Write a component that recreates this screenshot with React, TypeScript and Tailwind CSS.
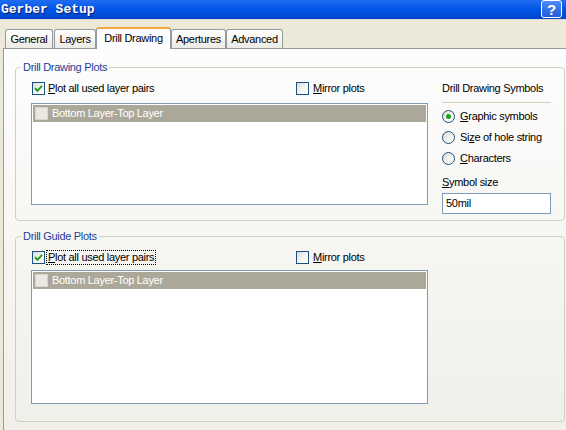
import type { FC, ReactNode } from "react";

const font = { fontFamily: '"Liberation Sans", Arial, sans-serif' };

const CheckBox: FC<{ checked?: boolean }> = ({ checked }) => (
  <span className="relative inline-block w-[13px] h-[13px] shrink-0 border border-[#1c5180] bg-gradient-to-br from-[#dcdcd7] via-[#f4f4f0] to-white">
    {checked && (
      <svg className="absolute left-[1px] top-[1px]" width="9" height="9" viewBox="0 0 9 9">
        <path d="M1 4.2 L3.5 6.8 L8 1.8" fill="none" stroke="#21a121" strokeWidth="2" />
      </svg>
    )}
  </span>
);

const Radio: FC<{ checked?: boolean; children: ReactNode }> = ({ checked, children }) => (
  <div className="flex items-center h-[13px] gap-[5px]">
    <span className="relative flex items-center justify-center w-[13px] h-[13px] rounded-full border border-[#1c5180] bg-gradient-to-br from-[#dcdcd7] via-[#f3f3ef] to-white">
      {checked && <span className="w-[5px] h-[5px] rounded-full bg-[#21a121]" />}
    </span>
    <span className="leading-[13px]">{children}</span>
  </div>
);

const Tab: FC<{ label: string; width: string; active?: boolean }> = ({ label, width, active }) =>
  active ? (
    <div
      className={`${width} h-[22px] -mb-px relative z-10 flex items-center justify-center bg-[#fcfcfe] border-x border-[#919b9c] border-t-[2px] border-t-[#f3a63a] rounded-t-[3px] pb-[2px]`}
    >
      {label}
    </div>
  ) : (
    <div
      className={`${width} h-[19px] flex items-center justify-center border-x border-t border-[#919b9c] rounded-t-[3px] bg-gradient-to-b from-white to-[#ecebe5]`}
    >
      {label}
    </div>
  );

const LayerList: FC<{ height: string }> = ({ height }) => (
  <div className={`w-[397px] ${height} border border-[#7f9db9] bg-white p-px`}>
    <div className="h-[17px] bg-[#aca899] flex items-center pl-[2px] gap-[4px] text-white">
      <span className="w-[13px] h-[13px] border border-[#d6d4cc] bg-[#e9e8e2]" />
      <span>Bottom Layer-Top Layer</span>
    </div>
  </div>
);

const PlotRow: FC<{ focused?: boolean }> = ({ focused }) => (
  <div className="flex items-center h-[13px] pl-px">
    <div className="w-[264px] flex items-center gap-[2px]">
      <CheckBox checked />
      <span className={`leading-[13px] px-px ${focused ? "outline outline-1 outline-dotted outline-black" : ""}`}>
        <span className="underline underline-offset-1">P</span>lot all used layer pairs
      </span>
    </div>
    <div className="flex items-center gap-[4px]">
      <CheckBox />
      <span className="leading-[13px]">
        <span className="underline underline-offset-1">M</span>irror plots
      </span>
    </div>
  </div>
);

const App: FC = () => {
  return (
    <div
      className="w-[566px] h-[430px] overflow-hidden flex flex-col bg-[#ece9d8] text-[11px] tracking-[-0.3px] text-black"
      style={font}
    >
      {/* title bar */}
      <div className="h-[19px] shrink-0 flex items-center justify-between bg-gradient-to-b from-[#1f6cf2] via-[#0055e5] to-[#0046cc] pr-[4px]">
        <span
          className="pl-[1px] text-white font-bold text-[13px] tracking-normal leading-none [text-shadow:1px_1px_0_#0a1d6b]"
          style={{ fontFamily: '"Liberation Mono", "Courier New", monospace' }}
        >
          Gerber Setup
        </span>
        <div className="w-[21px] h-[18px] -mt-[1px] rounded-[3px] border border-white bg-gradient-to-b from-[#4d8df5] to-[#2259d9] flex items-center justify-center text-white font-bold text-[15px] leading-none">
          ?
        </div>
      </div>

      {/* tab strip */}
      <div className="h-[29px] shrink-0 flex items-end pl-[5px] border-t border-[#dcdacb]">
        <Tab label="General" width="w-[48px] mr-[1px]" />
        <Tab label="Layers" width="w-[42px]" />
        <Tab label="Drill Drawing" width="w-[75px]" active />
        <Tab label="Apertures" width="w-[55px]" />
        <Tab label="Advanced" width="w-[57px]" />
      </div>

      {/* tab page */}
      <div className="flex-1 ml-[3px] border-l border-t border-[#919b9c] bg-gradient-to-b from-[#fdfdfe] via-[#f7f6f2] to-[#f1efe9] pl-[11px]">
        <fieldset className="mt-[11px] w-[550px] border border-[#d0d0bf] rounded-[4px] pl-[15px] pt-[8px] pb-[6px]">
          <legend className="-ml-[10px] px-[2px] leading-[14px] text-[#1d3f9a]">Drill Drawing Plots</legend>
          <div className="flex gap-[14px] items-start">
            <div className="flex flex-col gap-[8px]">
              <PlotRow />
              <LayerList height="h-[102px]" />
            </div>
            <div className="flex flex-col w-[109px]">
              <div className="leading-[13px] h-[13px]">Drill Drawing Symbols</div>
              <div className="mt-[7px] h-px bg-[#d0d0bf]" />
              <div className="mt-[7px] flex flex-col gap-[8px]">
                <Radio checked>
                  <span className="underline underline-offset-1">G</span>raphic symbols
                </Radio>
                <Radio>
                  Si<span className="underline underline-offset-1">z</span>e of hole string
                </Radio>
                <Radio>
                  <span className="underline underline-offset-1">C</span>haracters
                </Radio>
              </div>
              <div className="mt-[11px] leading-[13px]">
                <span className="underline underline-offset-1">S</span>ymbol size
              </div>
              <div className="mt-[4px] h-[21px] border border-[#7f9db9] bg-white flex items-center pl-[3px]">
                50mil
              </div>
            </div>
          </div>
        </fieldset>

        <fieldset className="mt-[8px] w-[550px] border border-[#d0d0bf] rounded-[4px] pl-[15px] pt-[8px] pb-[17px]">
          <legend className="-ml-[10px] px-[2px] leading-[14px] text-[#1d3f9a]">Drill Guide Plots</legend>
          <div className="flex flex-col gap-[6px]">
            <PlotRow focused />
            <LayerList height="h-[134px]" />
          </div>
        </fieldset>
      </div>
    </div>
  );
};

export default App;
